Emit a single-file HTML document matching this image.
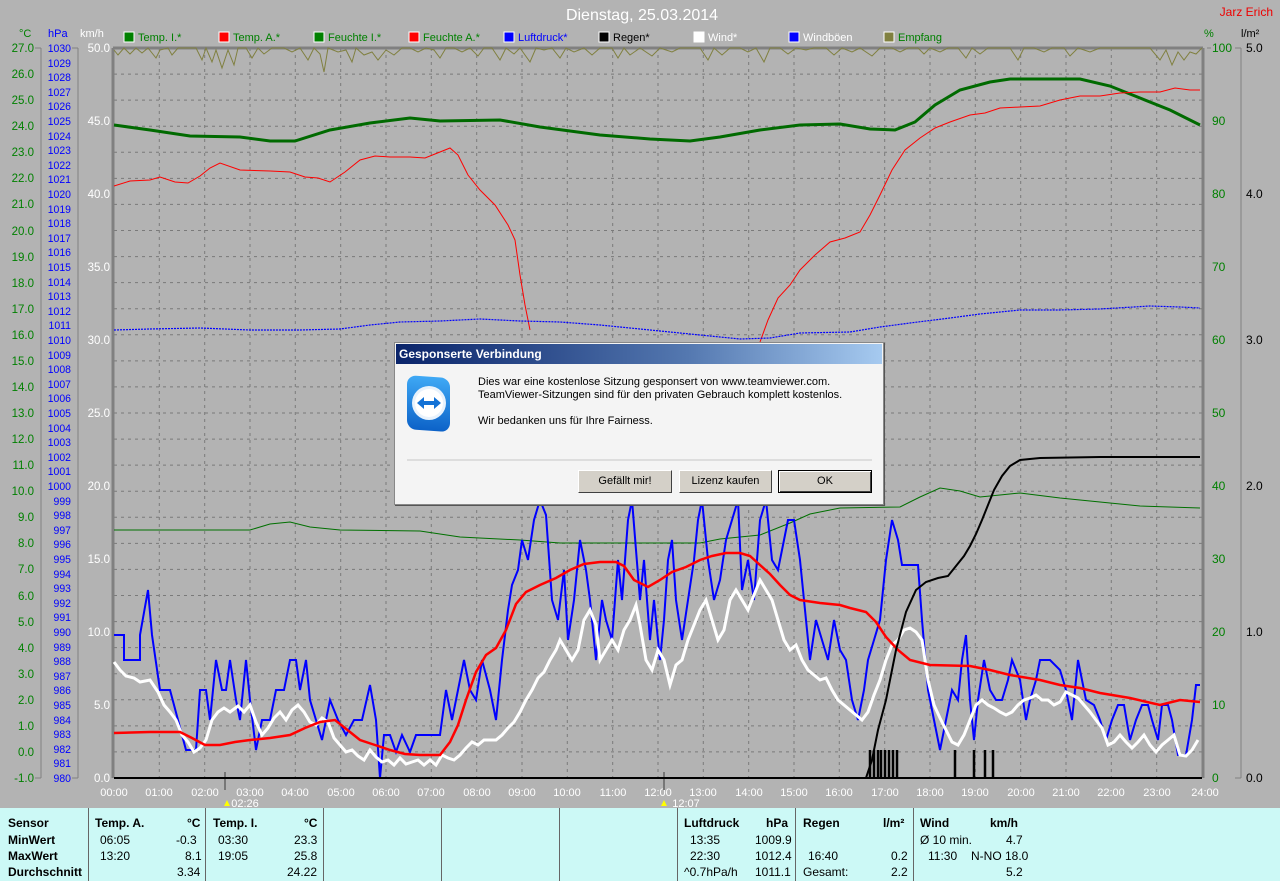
<!DOCTYPE html>
<html><head><meta charset="utf-8"><style>
body{margin:0;width:1280px;height:881px;background:#b3b3b3;overflow:hidden;position:relative;font-family:"Liberation Sans",sans-serif;}
svg{position:absolute;left:0;top:0}
.bp{position:absolute;left:0;top:808px;width:1280px;height:73px;background:#ccf9f6;font-size:12px;color:#000}
.bp div{position:absolute}
.vl{top:0;width:1px;height:73px;background:#666}
.b{font-weight:bold}
.dlg{position:absolute;left:394px;top:342px;width:488px;height:161px;background:#f4f4f4;border:1px solid #888;box-shadow:1px 1px 0 #555}
.tt{height:20px;background:linear-gradient(90deg,#0a246a,#5478b0 60%,#a6caf0);color:#fff;font-weight:bold;font-size:12px;line-height:20px;padding-left:3px;margin:1px}
.dt{position:absolute;left:83px;font-size:11px;color:#000}
.btn{position:absolute;top:127px;height:21px;background:#d4d0c8;border:1px solid;border-color:#fff #404040 #404040 #fff;font-size:11px;text-align:center;line-height:21px}
</style></head><body>
<svg width="1280" height="808" font-family="Liberation Sans, sans-serif" font-size="12">
<text x="642" y="20" fill="#fff" font-size="16" text-anchor="middle">Dienstag, 25.03.2014</text>
<text x="1273" y="16" fill="#e00" font-size="12" text-anchor="end">Jarz Erich</text>
<g font-size="11">
<rect x="124" y="32" width="10" height="10" fill="#008000" stroke="#fff"/><text x="138" y="41" fill="#008000">Temp. I.*</text>
<rect x="219" y="32" width="10" height="10" fill="#f00" stroke="#fff"/><text x="233" y="41" fill="#008000">Temp. A.*</text>
<rect x="314" y="32" width="10" height="10" fill="#008000" stroke="#fff"/><text x="328" y="41" fill="#008000">Feuchte I.*</text>
<rect x="409" y="32" width="10" height="10" fill="#f00" stroke="#fff"/><text x="423" y="41" fill="#008000">Feuchte A.*</text>
<rect x="504" y="32" width="10" height="10" fill="#00f" stroke="#fff"/><text x="518" y="41" fill="#00f">Luftdruck*</text>
<rect x="599" y="32" width="10" height="10" fill="#000" stroke="#fff"/><text x="613" y="41" fill="#000">Regen*</text>
<rect x="694" y="32" width="10" height="10" fill="#fff" stroke="#fff"/><text x="708" y="41" fill="#fff">Wind*</text>
<rect x="789" y="32" width="10" height="10" fill="#00f" stroke="#fff"/><text x="803" y="41" fill="#fff">Windböen</text>
<rect x="884" y="32" width="10" height="10" fill="#808040" stroke="#fff"/><text x="898" y="41" fill="#008000">Empfang</text>
<text x="19" y="37" fill="#008000">°C</text><text x="48" y="37" fill="#00f">hPa</text><text x="80" y="37" fill="#fff">km/h</text>
<text x="1204" y="37" fill="#008000">%</text><text x="1241" y="37" fill="#000">l/m²</text>
</g>
<g stroke="#7a7a7a" stroke-dasharray="3,4" stroke-width="1">
<path d="M114 74.1H1202M114 100.1H1202M114 126.2H1202M114 152.3H1202M114 178.4H1202M114 204.4H1202M114 230.5H1202M114 256.6H1202M114 282.6H1202M114 308.7H1202M114 334.8H1202M114 360.9H1202M114 386.9H1202M114 413H1202M114 439.1H1202M114 465.1H1202M114 491.2H1202M114 517.3H1202M114 543.4H1202M114 569.4H1202M114 595.5H1202M114 621.6H1202M114 647.6H1202M114 673.7H1202M114 699.8H1202M114 725.9H1202M114 751.9H1202"/>
<path d="M159.3 48V778M204.7 48V778M250 48V778M295.3 48V778M340.7 48V778M386 48V778M431.3 48V778M476.7 48V778M522 48V778M567.3 48V778M612.7 48V778M658 48V778M703.3 48V778M748.7 48V778M794 48V778M839.3 48V778M884.7 48V778M930 48V778M975.3 48V778M1020.7 48V778M1066 48V778M1111.3 48V778M1156.7 48V778"/>
</g>
<g stroke="#808080" fill="none">
<path d="M113 48V778M113 48H1203M1203 48V778" stroke-width="3"/>
<path d="M41 48V778M78 48V778M1241 48V778" stroke-width="1"/>
</g>
<path d="M114 778H1202" stroke="#000" stroke-width="2"/>
<g fill="#008000" text-anchor="end" font-size="11.5">
<text x="34" y="52">27.0</text><text x="34" y="78">26.0</text><text x="34" y="104">25.0</text><text x="34" y="130">24.0</text><text x="34" y="156">23.0</text><text x="34" y="182">22.0</text><text x="34" y="208">21.0</text><text x="34" y="235">20.0</text><text x="34" y="261">19.0</text><text x="34" y="287">18.0</text><text x="34" y="313">17.0</text><text x="34" y="339">16.0</text><text x="34" y="365">15.0</text><text x="34" y="391">14.0</text><text x="34" y="417">13.0</text><text x="34" y="443">12.0</text><text x="34" y="469">11.0</text><text x="34" y="495">10.0</text><text x="34" y="521">9.0</text><text x="34" y="547">8.0</text><text x="34" y="573">7.0</text><text x="34" y="600">6.0</text><text x="34" y="626">5.0</text><text x="34" y="652">4.0</text><text x="34" y="678">3.0</text><text x="34" y="704">2.0</text><text x="34" y="730">1.0</text><text x="34" y="756">0.0</text><text x="34" y="782">-1.0</text>
</g>
<g fill="#00f" text-anchor="end" font-size="11" transform="translate(71 0) scale(0.95 1) translate(-71 0)">
<text x="71" y="52">1030</text><text x="71" y="67">1029</text><text x="71" y="81">1028</text><text x="71" y="96">1027</text><text x="71" y="110">1026</text><text x="71" y="125">1025</text><text x="71" y="140">1024</text><text x="71" y="154">1023</text><text x="71" y="169">1022</text><text x="71" y="183">1021</text><text x="71" y="198">1020</text><text x="71" y="213">1019</text><text x="71" y="227">1018</text><text x="71" y="242">1017</text><text x="71" y="256">1016</text><text x="71" y="271">1015</text><text x="71" y="286">1014</text><text x="71" y="300">1013</text><text x="71" y="315">1012</text><text x="71" y="329">1011</text><text x="71" y="344">1010</text><text x="71" y="359">1009</text><text x="71" y="373">1008</text><text x="71" y="388">1007</text><text x="71" y="402">1006</text><text x="71" y="417">1005</text><text x="71" y="432">1004</text><text x="71" y="446">1003</text><text x="71" y="461">1002</text><text x="71" y="475">1001</text><text x="71" y="490">1000</text><text x="71" y="505">999</text><text x="71" y="519">998</text><text x="71" y="534">997</text><text x="71" y="548">996</text><text x="71" y="563">995</text><text x="71" y="578">994</text><text x="71" y="592">993</text><text x="71" y="607">992</text><text x="71" y="621">991</text><text x="71" y="636">990</text><text x="71" y="651">989</text><text x="71" y="665">988</text><text x="71" y="680">987</text><text x="71" y="694">986</text><text x="71" y="709">985</text><text x="71" y="724">984</text><text x="71" y="738">983</text><text x="71" y="753">982</text><text x="71" y="767">981</text><text x="71" y="782">980</text>
</g>
<g fill="#fff" text-anchor="end" font-size="11.5">
<text x="110" y="52">50.0</text><text x="110" y="125">45.0</text><text x="110" y="198">40.0</text><text x="110" y="271">35.0</text><text x="110" y="344">30.0</text><text x="110" y="417">25.0</text><text x="110" y="490">20.0</text><text x="110" y="563">15.0</text><text x="110" y="636">10.0</text><text x="110" y="709">5.0</text><text x="110" y="782">0.0</text>
</g>
<g fill="#008000" font-size="12">
<text x="1212" y="52">100</text><text x="1212" y="125">90</text><text x="1212" y="198">80</text><text x="1212" y="271">70</text><text x="1212" y="344">60</text><text x="1212" y="417">50</text><text x="1212" y="490">40</text><text x="1212" y="563">30</text><text x="1212" y="636">20</text><text x="1212" y="709">10</text><text x="1212" y="782">0</text>
</g>
<g fill="#000" font-size="12">
<text x="1246" y="52">5.0</text><text x="1246" y="198">4.0</text><text x="1246" y="344">3.0</text><text x="1246" y="490">2.0</text><text x="1246" y="636">1.0</text><text x="1246" y="782">0.0</text>
</g>
<g stroke="#808080"><path d="M35 48H41M35 778H41M72 48H78M72 778H78M1207 48H1211M1235 48H1241M1235 778H1241"/></g>
<g fill="#fff" font-size="11" text-anchor="middle">
<text x="114" y="796">00:00</text><text x="159" y="796">01:00</text><text x="205" y="796">02:00</text><text x="250" y="796">03:00</text><text x="295" y="796">04:00</text><text x="341" y="796">05:00</text><text x="386" y="796">06:00</text><text x="431" y="796">07:00</text><text x="477" y="796">08:00</text><text x="522" y="796">09:00</text><text x="567" y="796">10:00</text><text x="613" y="796">11:00</text><text x="658" y="796">12:00</text><text x="703" y="796">13:00</text><text x="749" y="796">14:00</text><text x="794" y="796">15:00</text><text x="839" y="796">16:00</text><text x="885" y="796">17:00</text><text x="930" y="796">18:00</text><text x="975" y="796">19:00</text><text x="1021" y="796">20:00</text><text x="1066" y="796">21:00</text><text x="1111" y="796">22:00</text><text x="1157" y="796">23:00</text><text x="1205" y="796">24:00</text>
<text x="245" y="807">02:26</text><text x="686" y="807">12:07</text>
</g>
<path d="M225 772V790M664 772V790" stroke="#777" stroke-width="2"/>
<path d="M224 806l3-6 3 6z M661 806l3-6 3 6z" fill="#ff0"/>
<polyline fill="none" stroke="#808040" stroke-width="1" points="114,50 118,55 124,48 130,54 136,48 142,53 148,48 156,58 160,50 168,48 172,55 178,48 190,48 196,48 202,60 206,48 212,62 216,50 222,68 228,50 234,65 238,48 246,48 252,58 258,48 264,54 272,48 284,48 292,52 300,48 308,60 314,48 320,54 324,72 328,48 338,52 346,50 352,62 356,48 364,55 372,52 378,60 386,50 394,55 402,48 410,48 418,52 426,48 434,50 440,58 446,48 454,48 462,52 470,48 478,56 484,48 492,48 500,60 506,48 514,54 520,48 530,62 536,48 544,50 552,48 560,58 566,48 574,52 584,48 592,55 600,48 612,48 618,58 624,48 630,55 640,48 652,56 660,48 672,52 680,48 690,48 700,48 708,60 714,48 722,55 730,48 740,48 748,52 756,48 764,62 770,48 780,48 788,54 796,48 806,50 814,48 826,48 834,55 842,48 852,52 860,48 872,56 880,48 892,48 900,52 908,48 918,48 924,54 930,48 940,52 948,48 958,48 966,58 972,48 980,54 988,48 1000,48 1010,48 1018,60 1024,48 1034,48 1044,52 1052,48 1064,48 1070,56 1078,48 1090,52 1100,48 1112,48 1124,48 1136,48 1150,48 1160,60 1166,50 1172,65 1178,52 1184,60 1190,52 1196,54 1202,48"/>
<polyline fill="none" stroke="#006a00" stroke-width="3" points="114,125 150,130 190,136 240,137 270,141 295,141 330,130 370,123 410,118 440,121 500,120 540,127 600,135 650,139 690,141 720,137 760,130 800,125 840,124 870,129 895,130 915,122 935,105 960,90 990,82 1010,79 1040,79 1080,79 1110,86 1140,98 1170,110 1200,125"/>
<polyline fill="none" stroke="#f00" stroke-width="1" points="114,186 130,181 150,180 160,177 175,182 188,183 200,176 210,168 220,163 240,170 270,171 290,172 305,177 318,178 330,182 345,172 360,160 375,156 390,157 410,157 425,158 440,152 450,148 458,155 468,175 480,190 495,205 508,225 515,240 520,275 525,305 530,330"/>
<polyline fill="none" stroke="#f00" stroke-width="1" points="760,342 768,320 778,298 790,285 800,270 815,255 830,242 845,238 860,232 870,215 880,195 892,170 905,150 920,138 935,128 950,122 970,115 985,113 1000,108 1020,107 1040,106 1060,100 1080,96 1100,96 1120,93 1140,92 1160,92 1175,88 1190,90 1200,90"/>
<polyline fill="none" stroke="#007000" stroke-width="1" points="114,530 250,530 270,524 290,522 310,527 340,530 420,531 440,534 460,537 520,540 560,543 700,543 720,539 760,535 790,523 810,514 840,508 900,507 920,497 940,488 960,491 980,497 1000,495 1020,493 1060,498 1100,502 1140,506 1200,508"/>
<polyline fill="none" stroke="#00f" stroke-width="1.2" stroke-dasharray="2,1" points="114,330 150,329 200,328 250,330 300,330 340,329 370,325 400,322 440,321 480,319 520,321 560,322 600,325 640,329 700,335 740,339 770,338 800,333 850,332 880,327 910,323 950,318 980,314 1020,310 1060,310 1100,309 1150,306 1180,307 1200,308"/>
<polyline fill="none" stroke="#00f" stroke-width="2" points="114,635 124,635 124,660 140,660 140,635 148,590 152,635 160,690 170,690 178,720 186,750 196,750 200,690 206,690 210,720 216,660 222,690 226,690 230,660 236,700 240,720 246,660 250,700 256,750 262,720 270,720 276,690 284,690 290,660 296,660 300,690 306,660 310,700 316,720 322,740 330,700 338,720 346,735 354,720 362,720 370,685 376,720 380,778 384,735 390,735 396,752 402,735 410,752 416,735 424,735 432,735 440,735 446,690 452,720 458,690 464,660 470,690 476,700 482,660 490,690 496,720 502,660 508,610 512,585 518,570 522,540 528,560 534,520 540,500 546,515 552,600 558,620 564,570 568,640 574,600 580,540 586,570 590,600 596,660 602,600 606,620 612,640 618,560 622,600 628,520 632,500 636,550 640,600 644,560 650,640 654,600 660,660 664,620 668,560 672,540 676,600 682,640 688,600 694,560 698,520 702,500 708,560 714,600 720,580 726,540 732,520 738,500 742,590 748,560 754,600 760,520 766,500 772,560 778,570 784,540 788,520 794,520 800,560 806,620 810,660 816,620 822,640 828,660 834,620 840,650 846,660 852,700 858,720 864,690 868,660 874,640 880,620 886,560 892,520 898,540 902,565 918,565 922,620 928,690 934,720 940,750 946,720 952,690 958,700 962,660 966,635 970,700 974,740 978,700 984,660 990,690 996,700 1002,700 1008,680 1012,660 1020,680 1026,720 1030,700 1036,680 1040,660 1050,660 1060,670 1066,690 1072,720 1078,660 1086,700 1094,705 1100,720 1106,740 1112,720 1118,705 1124,705 1130,740 1136,720 1142,705 1148,705 1152,720 1158,740 1162,705 1168,705 1172,720 1178,755 1186,755 1192,720 1196,685 1200,685"/>
<polyline fill="none" stroke="#fff" stroke-width="3" points="114,662 120,670 126,676 134,678 140,682 150,680 158,692 164,705 170,712 176,720 182,735 188,742 194,752 200,748 206,740 212,720 218,712 224,708 230,712 238,706 244,712 250,705 256,722 262,735 268,728 274,718 280,712 286,720 292,710 298,705 304,712 310,722 316,725 322,718 328,722 334,738 340,745 346,752 352,750 358,756 364,760 370,750 376,757 382,762 388,760 394,765 400,758 406,764 412,762 418,760 424,765 430,760 436,765 442,755 448,758 454,760 460,755 466,748 472,742 478,745 484,740 490,740 496,740 502,735 508,728 514,722 520,712 526,700 532,690 538,678 544,672 550,660 556,650 560,640 566,650 572,660 578,650 584,620 590,610 596,625 600,660 606,650 612,640 618,650 624,630 630,620 636,605 640,625 646,660 652,670 658,650 664,660 670,685 676,665 682,660 688,640 694,625 700,610 706,600 712,620 718,640 724,630 730,600 736,590 742,600 748,610 754,595 760,580 766,590 772,600 778,620 784,640 790,650 796,645 802,660 808,670 814,675 820,680 826,678 832,690 838,700 844,705 850,710 856,715 862,720 868,712 874,695 880,680 886,660 892,645 898,640 904,630 910,628 916,632 922,640 928,680 934,705 940,718 946,730 952,742 958,745 964,735 970,720 976,705 982,700 988,705 994,708 1000,712 1006,715 1012,712 1018,705 1024,700 1030,698 1036,695 1042,700 1048,700 1054,705 1060,702 1066,692 1072,695 1078,698 1084,705 1090,712 1096,720 1102,728 1108,745 1114,742 1120,735 1126,742 1132,748 1138,742 1144,735 1150,745 1156,752 1162,745 1168,740 1174,735 1180,755 1186,756 1192,750 1198,740"/>
<polyline fill="none" stroke="#f00" stroke-width="2.5" points="114,733 150,732 180,732 192,738 205,745 220,745 235,742 250,740 270,738 290,735 305,728 320,722 335,720 345,728 360,740 375,745 390,750 405,754 420,755 440,755 450,742 458,725 466,700 476,672 486,655 496,648 506,630 516,604 526,592 540,585 556,578 570,570 584,564 600,562 616,562 624,566 634,580 648,587 660,580 672,572 686,567 700,560 712,556 726,553 740,553 750,556 760,565 770,574 780,585 790,595 800,600 820,603 840,605 850,608 866,612 876,622 886,637 898,650 910,660 930,665 970,666 990,670 1010,675 1040,680 1060,685 1080,688 1100,693 1130,698 1160,705 1180,700 1200,702"/>
<polyline fill="none" stroke="#000" stroke-width="2" points="114,778 866,778 872,760 878,730 886,700 896,650 906,612 916,590 926,582 938,578 948,576 956,566 964,556 970,546 976,534 982,520 988,505 994,490 1002,476 1010,466 1020,460 1040,458 1100,457 1200,457"/>
<g stroke="#000" stroke-width="2.5"><path d="M870 778V750M874 778V750M878 778V750M881 778V750M885 778V750M889 778V750M893 778V750M897 778V750M955 778V750M974 778V750M985 778V750M993 778V750"/></g>
</svg>
<div class="dlg">
<div class="tt">Gesponserte Verbindung</div>
<svg style="left:10px;top:30px" width="58" height="60" viewBox="0 0 58 60"><defs><linearGradient id="g" x1="0" y1="0" x2="0" y2="1"><stop offset="0" stop-color="#3fa9f5"/><stop offset="1" stop-color="#0c62c8"/></linearGradient></defs><rect x="2" y="2" width="43" height="54" rx="9" fill="url(#g)" transform="skewY(4)"/><circle cx="24" cy="30" r="17" fill="#e8f2fc"/><circle cx="24" cy="30" r="14" fill="#fff"/><path d="M12 30l7-6v4h10v-4l7 6-7 6v-4H19v4z" fill="#1372d6"/></svg>
<div class="dt" style="top:33px">Dies war eine kostenlose Sitzung gesponsert von www.teamviewer.com.</div>
<div class="dt" style="top:46px">TeamViewer-Sitzungen sind für den privaten Gebrauch komplett kostenlos.</div>
<div class="dt" style="top:72px">Wir bedanken uns für Ihre Fairness.</div>
<div style="position:absolute;left:12px;top:116px;width:465px;height:2px;background:#ddd"></div>
<div class="btn" style="left:183px;width:92px">Gefällt mir!</div>
<div class="btn" style="left:284px;width:91px">Lizenz kaufen</div>
<div class="btn" style="left:383px;width:92px;border:1px solid #000;box-shadow:inset 1px 1px 0 #fff,inset -1px -1px 0 #404040">OK</div>
</div>
<div class="bp">
<div class="vl" style="left:88px"></div><div class="vl" style="left:205px"></div><div class="vl" style="left:323px"></div><div class="vl" style="left:441px"></div><div class="vl" style="left:559px"></div><div class="vl" style="left:677px"></div><div class="vl" style="left:795px"></div><div class="vl" style="left:913px"></div>
<div class="b" style="left:8px;top:8px">Sensor</div><div class="b" style="left:8px;top:25px">MinWert</div><div class="b" style="left:8px;top:41px">MaxWert</div><div class="b" style="left:8px;top:57px">Durchschnitt</div>
<div class="b" style="left:95px;top:8px">Temp. A.</div><div class="b" style="left:187px;top:8px">°C</div>
<div style="left:100px;top:25px">06:05</div><div style="left:176px;top:25px">-0.3</div>
<div style="left:100px;top:41px">13:20</div><div style="left:185px;top:41px">8.1</div>
<div style="left:177px;top:57px">3.34</div>
<div class="b" style="left:213px;top:8px">Temp. I.</div><div class="b" style="left:304px;top:8px">°C</div>
<div style="left:218px;top:25px">03:30</div><div style="left:294px;top:25px">23.3</div>
<div style="left:218px;top:41px">19:05</div><div style="left:294px;top:41px">25.8</div>
<div style="left:287px;top:57px">24.22</div>
<div class="b" style="left:684px;top:8px">Luftdruck</div><div class="b" style="left:766px;top:8px">hPa</div>
<div style="left:690px;top:25px">13:35</div><div style="left:755px;top:25px">1009.9</div>
<div style="left:690px;top:41px">22:30</div><div style="left:755px;top:41px">1012.4</div>
<div style="left:684px;top:57px">^0.7hPa/h</div><div style="left:755px;top:57px">1011.1</div>
<div class="b" style="left:803px;top:8px">Regen</div><div class="b" style="left:883px;top:8px">l/m²</div>
<div style="left:808px;top:41px">16:40</div><div style="left:891px;top:41px">0.2</div>
<div style="left:803px;top:57px">Gesamt:</div><div style="left:891px;top:57px">2.2</div>
<div class="b" style="left:920px;top:8px">Wind</div><div class="b" style="left:990px;top:8px">km/h</div>
<div style="left:920px;top:25px">Ø 10 min.</div><div style="left:1006px;top:25px">4.7</div>
<div style="left:928px;top:41px">11:30</div><div style="left:971px;top:41px">N-NO 18.0</div>
<div style="left:1006px;top:57px">5.2</div>
</div>
</body></html>
